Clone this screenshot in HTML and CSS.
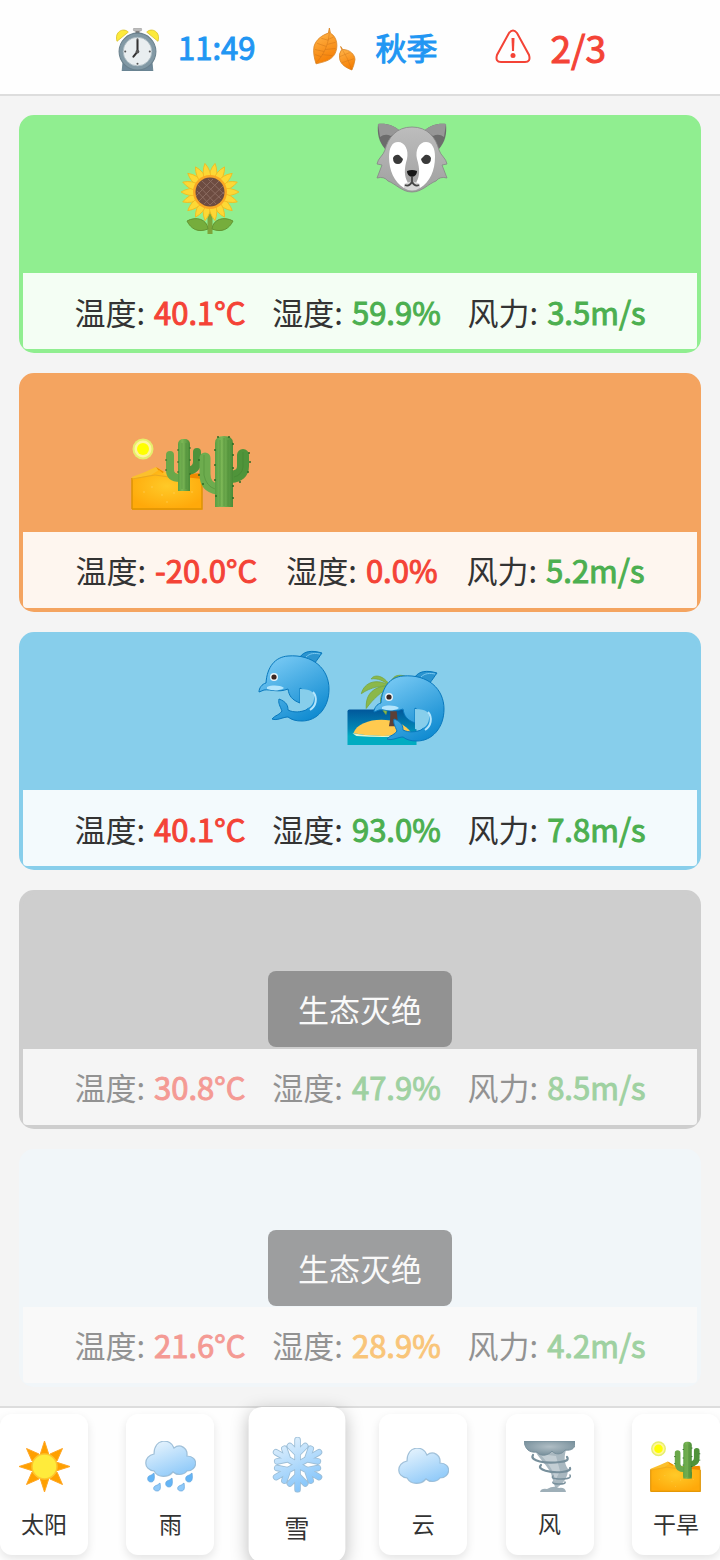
FILE: index.html
```html
<!DOCTYPE html>
<html lang="zh-CN">
<head>
    <meta charset="UTF-8">
    <meta name="viewport" content="width=device-width, initial-scale=1.0">
    <title>生态</title>
    <link rel="stylesheet" href="styles.css">
</head>
<body>
    <!-- shared icons -->
    <svg class="icon-defs" aria-hidden="true">
        <defs>
            <linearGradient id="cloudFill" gradientUnits="userSpaceOnUse" x1="16" y1="0" x2="30" y2="36">
                <stop offset="0" stop-color="#e3f2fd"/><stop offset="1" stop-color="#90caf9"/>
            </linearGradient>
            <linearGradient id="snowFill" gradientUnits="userSpaceOnUse" x1="-10" y1="-22" x2="10" y2="22">
                <stop offset="0" stop-color="#dceefc"/><stop offset="1" stop-color="#82c4fb"/>
            </linearGradient>
            <linearGradient id="dolphinFill" x1="0.2" y1="0" x2="0.8" y2="1">
                <stop offset="0" stop-color="#7bcbf5"/><stop offset="1" stop-color="#0b88cf"/>
            </linearGradient>
            <linearGradient id="cactusFill" x1="0" y1="0" x2="1" y2="0">
                <stop offset="0" stop-color="#5a9f42"/><stop offset="0.35" stop-color="#7cb756"/><stop offset="1" stop-color="#4a8c37"/>
            </linearGradient>
            <radialGradient id="sandFill" cx="0.5" cy="0.4" r="0.6">
                <stop offset="0" stop-color="#ffca28"/><stop offset="1" stop-color="#ffa90a"/>
            </radialGradient>
            <linearGradient id="leafFill" x1="0.3" y1="0" x2="0.6" y2="1">
                <stop offset="0" stop-color="#ffb74d"/><stop offset="1" stop-color="#f57c00"/>
            </linearGradient>
            <linearGradient id="wolfFill" x1="0" y1="0" x2="0" y2="1">
                <stop offset="0" stop-color="#bdbdbd"/><stop offset="1" stop-color="#a0a0a0"/>
            </linearGradient>
            <linearGradient id="seaFill" x1="0" y1="0" x2="0" y2="1">
                <stop offset="0" stop-color="#01579b"/><stop offset="0.55" stop-color="#0288b5"/><stop offset="0.75" stop-color="#00acc1"/>
            </linearGradient>
            <radialGradient id="stormFill" cx="0.5" cy="0.4" r="0.6">
                <stop offset="0" stop-color="#b0bec5"/><stop offset="1" stop-color="#78909c"/>
            </radialGradient>
        </defs>

        <symbol id="cloud" viewBox="0 0 51 51">
            <path d="M9 30C-2 29-2 15 9 13C9-3 26-3 29 7C35 2 43 7 42 15C54 15 53 30 42 30C38 35 31 34 28 31C23 37 13 37 9 30Z" fill="url(#cloudFill)" stroke="#90b4cf" stroke-opacity=".8" stroke-width="1.2"/>
        </symbol>

        <symbol id="desert" viewBox="0 0 72 72">
            <circle cx="12" cy="11" r="10.500" fill="#e6ee6c"/>
            <circle cx="12" cy="11" r="8.500" fill="#fff59d"/>
            <circle cx="12" cy="11" r="6" fill="#ffff00"/>
            <path d="M1 39L14 34L25 29L36 35L71 36V72H1Z" fill="#fbc02d"/>
            <path d="M25 29L33 34L30 36Z M58 36L70 35L71 41H52Z" fill="#f08a00"/>
            <path d="M1 41L20 37L28 32L34 37L71 41V72H1Z" fill="url(#sandFill)"/>
            <path d="M1 71H71V41M1 40V71" fill="none" stroke="#dd9305" stroke-width="1.500"/>
            <path d="M1 41L24 37L45 40" fill="none" stroke="#e9a820"/>
            <g fill="#ffe082" fill-opacity=".6"><circle cx="13" cy="54" r=".7"/><circle cx="21" cy="49" r=".7"/><circle cx="31" cy="57" r=".7"/><circle cx="43" cy="55" r=".7"/><circle cx="36" cy="64" r=".7"/><circle cx="61" cy="54" r=".7"/></g>
            <path d="M39 17V32Q39 40 49 40" fill="none" stroke="#6aa84a" stroke-width="8" stroke-linecap="round"/>
            <path d="M66 14V24Q66 32 56 33" fill="none" stroke="#4f923a" stroke-width="8" stroke-linecap="round"/>
            <rect x="47" y="1" width="12" height="52" rx="5" fill="url(#cactusFill)"/>
            <rect x="47" y="44" width="12" height="9" fill="url(#cactusFill)"/>
            <path d="M51 5V51M55 5V51" stroke="#447e32" stroke-opacity=".5" stroke-width=".8"/>
            <path d="M46 12h2M46 24h2M46 34h2M58 10h2M58 22h2M58 36h2M34 22h2M34 32h2M69 18h2M69 27h2" stroke="#2e6b25" stroke-width="1.200"/>
        </symbol>

        <symbol id="cactus" viewBox="0 0 72 72">
            <path d="M17 23V39Q17 52 29 54" fill="none" stroke="#6dac4e" stroke-width="11" stroke-linecap="round"/>
            <path d="M55 20V31Q55 41 43 42" fill="none" stroke="#4f943a" stroke-width="12" stroke-linecap="round"/>
            <path d="M27 8Q27 1 36 1T45 8V72H27Z" fill="url(#cactusFill)"/>
            <path d="M32 5V71M36 3V71M40 5V71M16 20V40Q18 51 27 54M55 17V32Q54 40 46 42" fill="none" stroke="#3c7a2c" stroke-opacity=".35"/>
            <path d="M26 15h2M26 30h2M26 45h2M27 61h2M44 9h2M44 20h2M44 33h2M44 51h2M44 63h2M10 25h2M10 40h2M14 49h2M60 18h2M61 27h2M59 37h2M52 46v2M30 1v2M41 1v2" stroke="#2e6b25" stroke-width="1.500"/>
        </symbol>

        <symbol id="dolphin" viewBox="0 0 72 72">
            <path d="M42 7C46 1 54 0 64 3C61 7 60 9 56 14Z" fill="#2b94cf" stroke="#0878bd"/>
            <path d="M21 49C29 52 30 56 30 60C36 63 43 62 48 60C54 56 56 47 42 38L42 53C34 50 31 46 30 39C20 43 13 39 6 40L1 42C1 38 4 34 8 33C9 17 17 7 30 6C55 4 71 19 71 39C71 58 59 71 44 71C38 71 34 70 30 67C25 67 19 71 14 69C17 65 22 65 24 61C22 56 20 53 21 49Z" fill="url(#dolphinFill)" stroke="#0878bd"/>
            <path d="M42 39C54 39 57 43 56 49C55 57 49 60 42 59Z" fill="#87ceeb"/>
            <path d="M55 42C60 48 58 56 52 60" fill="none" stroke="#b3e5fc" stroke-width="2"/>
            <path d="M9 37C14 35 22 35 26 38C20 42 14 40 9 39Z" fill="#b3e5fc"/>
            <path d="M48 7C52 3 57 3 62 4" fill="none" stroke="#7ac8ef"/>
            <circle cx="16" cy="27" r="4" fill="#e8f4fa"/>
            <circle cx="16" cy="27" r="2.600" fill="#3b2521"/>
        </symbol>

        <symbol id="island" viewBox="0 0 72 73">
            <path d="M0 39Q0 37 2 37H70V73H0Z" fill="url(#seaFill)"/>
            <path d="M6 61C12 44 53 42 65 61Q36 67 6 61Z" fill="#ffca4f"/>
            <path d="M5 61Q36 67 66 61L62 64Q36 66 9 64Z" fill="#e8f3cc"/>
            <path d="M42 54C44 46 44 38 42 30H48C50 38 51 46 51 54Z" fill="#5d4037"/>
            <g fill="#8bb84a" stroke="#76a53d" stroke-width=".8">
                <path d="M43 13C37 2 27 1 24 6C31 5 37 8 43 13Z"/>
                <path d="M43 13C30 5 17 9 14 21C24 14 34 13 43 13Z"/>
                <path d="M43 13C28 13 18 20 19 36C26 26 34 20 43 13Z"/>
                <path d="M43 13C31 20 31 33 39 42C42 30 45 22 43 13Z"/>
                <path d="M43 13C45 3 50 1 58 3C51 5 48 9 43 13Z"/>
            </g>
        </symbol>

        <symbol id="wolf" viewBox="0 0 72 72">
            <path d="M2 2C11 1 18 4 23 8L9 27C3 20 1 12 2 2Z" fill="#6c6c6c"/>
            <path d="M70 2C61 1 54 4 49 8L63 27C69 20 71 12 70 2Z" fill="#6c6c6c"/>
            <path d="M2 2C11 1 18 4 23 8L15 14Q9 11 4 15Z M70 2C61 1 54 4 49 8L57 14Q63 11 68 15Z" fill="#969696"/>
            <path d="M36 5C52 5 60 16 63 28C65 34 70 36 71 42L66 43L71 56Q64 54 60 59C52 62 46 70 36 70C26 70 20 62 12 59Q8 54 1 56L6 43L1 42C2 36 7 34 9 28C12 16 20 5 36 5Z" fill="url(#wolfFill)" stroke="#858585" stroke-width=".8"/>
            <path d="M22 20C29 20 33 28 31 37C28 47 28 54 32 61Q32 66 28 66C18 60 13 48 13 35C13 26 16 20 22 20Z" fill="#fff"/>
            <path d="M50 20C43 20 39 28 41 37C44 47 44 54 40 61Q40 66 44 66C54 60 59 48 59 35C59 26 56 20 50 20Z" fill="#fff"/>
            <path d="M28 62Q36 57 44 62V66Q36 71 28 66Z" fill="#d7d7d7"/>
            <path d="M17 36Q19 32 23 33L27 37Q26 42 22 42Q17 42 17 36Z M55 36Q53 32 49 33L45 37Q46 42 50 42Q55 42 55 36Z" fill="#3a3a3a"/>
            <path d="M31 49Q36 47 41 49Q41 54 36 55Q31 54 31 49Z" fill="#171717"/>
            <path d="M36 54V60Q33 65 29 63M36 60Q39 65 43 63" fill="none" stroke="#444" stroke-width="1.800"/>
        </symbol>

        <symbol id="sunflower" viewBox="0 0 72 72">
            <path d="M36 50V72" stroke="#7da53a" stroke-width="5"/>
            <path d="M13 59C22 54 33 57 34 67C24 71 17 67 13 59Z M59 59C50 54 39 57 38 67C48 71 55 67 59 59Z" fill="#76ad3c" stroke="#639532"/>
            <defs>
                <path id="petal" d="M36 1Q41 9 39 18H33Q31 9 36 1Z"/>
                <g id="petals">
                    <use href="#petal"/><use href="#petal" transform="rotate(60 36 30)"/><use href="#petal" transform="rotate(120 36 30)"/>
                    <use href="#petal" transform="rotate(180 36 30)"/><use href="#petal" transform="rotate(240 36 30)"/><use href="#petal" transform="rotate(300 36 30)"/>
                </g>
            </defs>
            <g fill="#fdd835" stroke="#f2b91e" stroke-width=".8">
                <use href="#petals" transform="rotate(10 36 30)"/><use href="#petals" transform="rotate(30 36 30)"/><use href="#petals" transform="rotate(50 36 30)"/>
            </g>
            <circle cx="36" cy="30" r="17" fill="#f9a825"/>
            <circle cx="36" cy="30" r="14.500" fill="#6d4c41"/>
            <path d="M24 23L42 42M28 19L47 37M34 17L50 32M23 29L36 43M22 34L39 17M25 39L45 19M30 42L49 24M36 43L50 30" stroke="#8d6e63" stroke-width=".9"/>
        </symbol>
    </svg>

    <header class="status-bar">
        <div class="status-item">
            <svg class="status-icon" viewBox="0 0 42 42" aria-hidden="true">
                <path d="M6 42L7 32H35L36 42Z" fill="#70899a" stroke="#607d8b" stroke-width=".8"/>
                <path d="M1 13C-2 4 7-1 12 4Z M41 13C44 4 35-1 30 4Z" fill="#fdea3b" stroke="#d9c22b" stroke-width=".8"/>
                <path d="M19 2H23V6H19Z" fill="#757575"/>
                <rect x="17" y="0" width="8" height="3" rx="1" fill="#bdbdbd" stroke="#999" stroke-width=".5"/>
                <circle cx="21" cy="23" r="18" fill="#8299a5" stroke="#6a818d"/>
                <circle cx="21" cy="23" r="14" fill="#e9eef0" stroke="#a5b5bd" stroke-width=".8"/>
                <path d="M21 12V23L17 28" fill="none" stroke="#333" stroke-width="2" stroke-linecap="round"/>
                <g fill="#555"><circle cx="21" cy="11" r="1"/><circle cx="21" cy="35" r="1"/><circle cx="9" cy="23" r="1"/><circle cx="33" cy="23" r="1"/><circle cx="21" cy="23" r="1.800"/></g>
            </svg>
            <span class="status-value">11:49</span>
        </div>
        <div class="status-item">
            <svg class="status-icon" viewBox="0 0 42 42" aria-hidden="true">
                <path d="M16 0L17 5C24 9 25 19 21 26C17 32 11 33 3 35C1 29 0 23 1 18C3 11 9 7 15 5Z" fill="url(#leafFill)" stroke="#d98324" stroke-width=".8"/>
                <path d="M16 4C15 17 10 27 3 34M15 11L20 9M14 16L22 14M12 21L22 20M9 26L19 27M15 12L8 10M13 18L4 15M11 23L2 21M8 28L2 26" fill="none" stroke="#c56b14" stroke-opacity=".55" stroke-width=".7"/>
                <path d="M27 18L29 21C36 21 41 26 41 31Q40 37 38 41C33 39 27 36 26 30Q25 25 28 21Z" fill="url(#leafFill)" stroke="#d98324" stroke-width=".8"/>
                <path d="M28 20Q34 29 38 41M31 26L36 24M34 32L40 30M31 26L26 28M34 32L28 34" fill="none" stroke="#c56b14" stroke-opacity=".55" stroke-width=".6"/>
            </svg>
            <span class="status-value">秋季</span>
        </div>
        <div class="status-item">
            <svg class="status-icon status-icon-warn" viewBox="0 0 36 36" aria-hidden="true">
                <path d="M14 4Q18-1 22 4L34 26Q36 33 30 33H6Q0 33 2 26Z" fill="none" stroke="#f44336" stroke-width="2"/>
                <path d="M16.500 9H19.500L19 22H17Z" fill="#f44336"/>
                <circle cx="18" cy="26.500" r="2.500" fill="#f44336"/>
            </svg>
            <span class="status-value danger-count">2/3</span>
        </div>
    </header>

    <main class="ecosystems">
        <section class="ecosystem grassland">
            <div class="habitat">
                <svg class="creature sunflower"><use href="#sunflower"/></svg>
                <svg class="creature wolf"><use href="#wolf"/></svg>
            </div>
            <div class="env-info">
                <span>温度: <b class="danger">40.1°C</b></span>
                <span>湿度: <b class="normal">59.9%</b></span>
                <span>风力: <b class="normal">3.5m/s</b></span>
            </div>
        </section>
        <section class="ecosystem desert">
            <div class="habitat">
                <svg class="creature dune"><use href="#desert"/></svg>
                <svg class="creature cactus"><use href="#cactus"/></svg>
            </div>
            <div class="env-info">
                <span>温度: <b class="danger">-20.0°C</b></span>
                <span>湿度: <b class="danger">0.0%</b></span>
                <span>风力: <b class="normal">5.2m/s</b></span>
            </div>
        </section>
        <section class="ecosystem ocean">
            <div class="habitat">
                <svg class="creature dolphin-left"><use href="#dolphin"/></svg>
                <svg class="creature island"><use href="#island"/></svg>
                <svg class="creature dolphin-right"><use href="#dolphin"/></svg>
            </div>
            <div class="env-info">
                <span>温度: <b class="danger">40.1°C</b></span>
                <span>湿度: <b class="normal">93.0%</b></span>
                <span>风力: <b class="normal">7.8m/s</b></span>
            </div>
        </section>
        <section class="ecosystem city extinct">
            <div class="habitat"></div>
            <div class="env-info">
                <span>温度: <b class="danger">30.8°C</b></span>
                <span>湿度: <b class="normal">47.9%</b></span>
                <span>风力: <b class="normal">8.5m/s</b></span>
            </div>
            <div class="extinct-label">生态灭绝</div>
        </section>
        <section class="ecosystem polar extinct">
            <div class="habitat"></div>
            <div class="env-info">
                <span>温度: <b class="danger">21.6°C</b></span>
                <span>湿度: <b class="warning">28.9%</b></span>
                <span>风力: <b class="normal">4.2m/s</b></span>
            </div>
            <div class="extinct-label">生态灭绝</div>
        </section>
    </main>

    <footer class="weather-bar">
        <button type="button" class="weather-card">
            <svg class="weather-icon" viewBox="0 0 51 51" aria-hidden="true">
                <path d="M25.500 0L30 14L21 14Z M25.500 51L30 37H21Z M0 25.500L14 21V30Z M51 25.500L37 21V30Z M7.500 7.500L20 13L13 20Z M43.500 7.500L38 20L31 13Z M7.500 43.500L13 31L20 38Z M43.500 43.500L31 38L38 31Z" fill="#ffa000" stroke="#ffa726" stroke-width="1"/>
                <circle cx="25.500" cy="25.500" r="12.500" fill="#ffeb3b" stroke="#fdc52c" stroke-width="1.500"/>
            </svg>
            <span>太阳</span>
        </button>
        <button type="button" class="weather-card">
            <svg class="weather-icon" viewBox="0 0 51 51" aria-hidden="true">
                <use href="#cloud"/>
                <g stroke="#64a5dc" stroke-width=".7">
                    <path id="drop" d="M9 32C10 38 9 41 6 41C2 41 2 36 4 35Q7 34 9 32Z" fill="#64b5f6"/>
                    <use href="#drop" x="18" y="5"/><use href="#drop" x="38"/>
                    <path id="drop-light" d="M15 42C16 48 15 50 12 50C8 50 8 46 10 45Q13 44 15 42Z" fill="#90caf9"/>
                    <use href="#drop-light" x="24"/>
                </g>
            </svg>
            <span>雨</span>
        </button>
        <button type="button" class="weather-card selected">
            <svg class="weather-icon" viewBox="-25.500 -25.500 51 51" aria-hidden="true">
                <defs>
                    <path id="flake" d="M0-22.500V22.500M-19.500-11.300L19.500 11.300M-19.500 11.300L19.500-11.300M-7-17L0-10L7-17M-7 17L0 10L7 17M12-14.500L8.700-5L18.500-3M-12-14.500L-8.700-5L-18.500-3M12 14.500L8.700 5L18.500 3M-12 14.500L-8.700 5L-18.500 3"/>
                </defs>
                <g fill="none" stroke-linecap="round" stroke-linejoin="round">
                    <use href="#flake" stroke="#9dbfd8" stroke-width="6"/>
                    <use href="#flake" stroke="url(#snowFill)" stroke-width="4.400"/>
                </g>
            </svg>
            <span>雪</span>
        </button>
        <button type="button" class="weather-card">
            <svg class="weather-icon" viewBox="0 -7 51 51" aria-hidden="true"><use href="#cloud" width="51" height="51"/></svg>
            <span>云</span>
        </button>
        <button type="button" class="weather-card">
            <svg class="weather-icon" viewBox="0 0 51 51" aria-hidden="true">
                <path d="M11 10C17 20 27 28 28 36L31 46H34C39 42 44 37 44 28C40 22 40 16 42 9Z" fill="#a9b8c0"/>
                <path d="M16 13C22 20 30 28 31 40L36 30L32 15Z" fill="#c3ced4"/>
                <path d="M16 51Q17 47 23 48Q30 44 35 47Q41 46 42 51Z" fill="#9eafb8"/>
                <g fill="none" stroke="#78909c" stroke-linecap="round">
                    <path d="M9 14C5 20 22 23 36 21Q46 20 43 16" stroke-width="2.200"/>
                    <path d="M17 24C12 29 27 32 38 31Q47 30 46 27" stroke-width="2.200"/>
                    <path d="M29 35Q26 38 37 38T46 34M29 41Q28 43 35 43T41 41" stroke-width="1.500"/>
                </g>
                <path d="M0 0H51C52 7 48 10 41 9C38 14 31 14 28 10C23 16 15 15 13 11C5 12 1 8 0 0Z" fill="url(#stormFill)" stroke="#78909c"/>
            </svg>
            <span>风</span>
        </button>
        <button type="button" class="weather-card">
            <svg class="weather-icon" viewBox="0 0 72 72" aria-hidden="true"><use href="#desert"/></svg>
            <span>干旱</span>
        </button>
    </footer>
</body>
</html>
```
FILE: styles.css
```css
* {
    margin: 0;
    padding: 0;
    box-sizing: border-box;
}
body {
    display: flex;
    flex-direction: column;
    min-height: 100vh;
    background: #f4f4f4;
    color: #333;
    font-family: "Noto Sans CJK SC", sans-serif;
    font-size: 31px;
    overflow-x: hidden;
}
.icon-defs {
    position: absolute;
    width: 0;
    height: 0;
}

/* top bar */
.status-bar {
    display: flex;
    justify-content: center;
    align-items: center;
    gap: 58px;
    height: 96px;
    padding-left: 2px;
    background: #fefefe;
    border-bottom: 2px solid #ddd;
}
.status-item {
    display: flex;
    align-items: center;
    gap: 19px;
}
.status-icon {
    width: 43px;
    height: 43px;
    margin-top: 4px;
}
.status-icon-warn {
    width: 36px;
    height: 36px;
    margin-top: 0;
}
/* values: regular cut thickened with a stroke */
.status-value,
.env-info b {
    font-weight: normal;
    -webkit-text-stroke: 1px currentColor;
}
.status-value {
    color: #2196f3;
    line-height: 44px;
}
.danger-count {
    color: #f44336;
    font-size: 37px;
}

/* ecosystems */
.ecosystems {
    flex: 1;
    display: grid;
    grid-auto-rows: 1fr;
    gap: 20px;
    padding: 19px;
}
.ecosystem {
    position: relative;
    display: flex;
    flex-direction: column;
    border: 4px solid;
    border-radius: 15px;
}
.grassland { background: #90ee90; border-color: #90ee90; }
.desert { background: #f4a460; border-color: #f4a460; }
.ocean { background: #87ceeb; border-color: #87ceeb; }
.city { background: #a9a9a9; border-color: #a9a9a9; }
.polar { background: #f0f8ff; border-color: #f0f8ff; }
.extinct { opacity: 0.5; }
.habitat {
    position: relative;
    flex: 1;
    min-height: 120px;
}
.creature {
    position: absolute;
    width: 72px;
    height: 72px;
}
.sunflower { left: 151px; top: 43px; }
.wolf { left: 353px; top: 3px; }
.dune { left: 108px; top: 61px; }
.cactus { left: 165px; top: 58px; }
.dolphin-left { left: 235px; top: 14px; }
.island { left: 324px; top: 37px; }
.dolphin-right { left: 350px; top: 34px; }
.env-info {
    display: flex;
    justify-content: space-around;
    align-items: center;
    height: 76px;
    padding: 0 38px;
    background: rgba(255,255,255,0.9);
    border-radius: 0 0 4px 4px;
    white-space: nowrap;
}
.env-info b { margin-left: 2px; }
.normal { color: #4caf50; }
.warning { color: #ff9800; }
.danger { color: #f44336; }
.extinct-label {
    position: absolute;
    top: 50%;
    left: 50%;
    transform: translate(-50%, -50%);
    padding: 15px 30px;
    background: rgba(0,0,0,0.7);
    color: white;
    border-radius: 8px;
    line-height: 46px;
    white-space: nowrap;
}

/* weather picker */
.weather-bar {
    display: flex;
    justify-content: space-between;
    align-items: center;
    height: 154px;
    background: #fefefe;
    border-top: 2px solid #ddd;
}
.weather-card {
    display: flex;
    flex-direction: column;
    align-items: center;
    gap: 14px;
    width: 88px;
    height: 141px;
    padding-top: 27px;
    border: none;
    border-radius: 12px;
    background: white;
    color: #333;
    font-family: inherit;
    font-size: 23px;
    line-height: 34px;
    box-shadow: 0 4px 10px rgba(0,0,0,0.1);
    cursor: pointer;
}
.weather-card.selected {
    transform: scale(1.1);
    box-shadow: 0 4px 15px rgba(0,0,0,0.25);
}
.weather-icon {
    width: 51px;
    height: 51px;
}
```
